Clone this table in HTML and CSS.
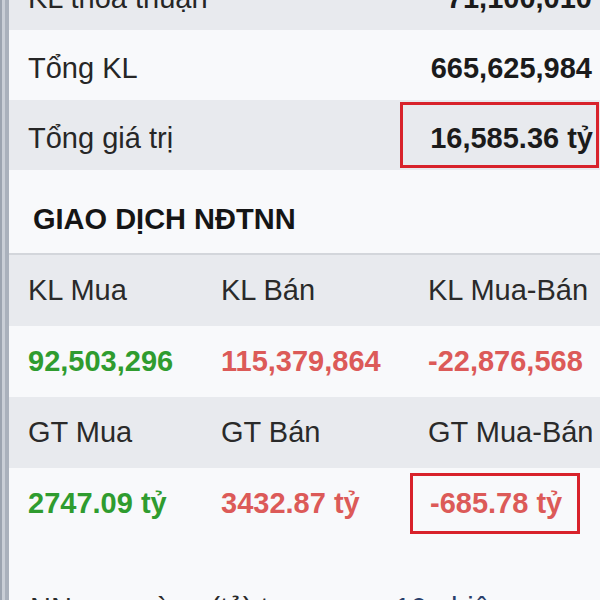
FILE: index.html
```html
<!DOCTYPE html>
<html lang="vi">
  <head>
    <meta charset="UTF-8" />
    <meta name="viewport" content="width=device-width, initial-scale=1.0" />
    <title>Giao dịch NĐTNN</title>
    <link rel="stylesheet" href="styles.css">
  </head>
  <body>
    <div class="page">
      <div class="edge"></div>
      <div class="main">
        <!-- market summary -->
        <div class="row gray cut">
          <span class="label">KL thỏa thuận</span>
          <span class="val">71,100,010</span>
        </div>
        <div class="row">
          <span class="label">Tổng KL</span>
          <span class="val">665,625,984</span>
        </div>
        <div class="row gray">
          <span class="label">Tổng giá trị</span>
          <span class="val boxed">16,585.36 tỷ</span>
        </div>

        <div class="section-title">GIAO DỊCH NĐTNN</div>

        <!-- foreign investors table -->
        <div class="table">
          <div class="trow head">
            <div class="cell">KL Mua</div>
            <div class="cell">KL Bán</div>
            <div class="cell">KL Mua-Bán</div>
          </div>
          <div class="trow">
            <div class="cell num up">92,503,296</div>
            <div class="cell num down">115,379,864</div>
            <div class="cell num down">-22,876,568</div>
          </div>
          <div class="trow head">
            <div class="cell">GT Mua</div>
            <div class="cell">GT Bán</div>
            <div class="cell">GT Mua-Bán</div>
          </div>
          <div class="trow">
            <div class="cell num up">2747.09 tỷ</div>
            <div class="cell num down">3432.87 tỷ</div>
            <div class="cell num down"><span class="mark">-685.78 tỷ</span></div>
          </div>
        </div>

        <div class="footer">NN mua ròng (tỷ) trong <span class="link">10 phiên</span></div>
      </div>
    </div>
  </body>
</html>
```

FILE: styles.css
```css
/* page */
body {
  margin: 0;
  background-color: #f8f9fb;
  font-family: "Liberation Sans", Arial, sans-serif;
  font-size: 29px;
  color: #262626;
  overflow: hidden;
}
.page {
  display: flex;
  height: 600px;
  overflow: hidden;
}
.edge {
  width: 9px;
  flex-shrink: 0;
  background: linear-gradient(to right, #9ca4b0 0, #9ca4b0 2px, #c9ced6 2px, #c9ced6 5px, #aab1bc 5px);
}
.main {
  flex: 1;
  min-width: 0;
}

/* summary rows */
.row {
  display: flex;
  justify-content: space-between;
  align-items: center;
  height: 70px;
  padding-left: 19px;
  background-color: #f8f9fb;
}
.row.gray {
  background-color: #e8eaee;
}
.row.cut {
  margin-top: -40px;
}
.label {
  line-height: 64px;
  padding-top: 6px;
}
.val {
  font-weight: bold;
  color: #1b1b1b;
  line-height: 64px;
  padding-top: 6px;
  padding-right: 8px;
}
.val.boxed {
  box-sizing: border-box;
  width: 199px;
  height: 66px;
  margin-right: 1px;
  padding: 3px 3px 0 0;
  line-height: 60px;
  text-align: right;
  border: 3px solid #d8222b;
}

.section-title {
  height: 85px;
  padding-left: 24px;
  font-weight: bold;
  color: #151515;
  line-height: 33px;
  box-sizing: border-box;
  padding-top: 33px;
  border-bottom: 2px solid #d3d6db;
}

/* table */
.trow {
  display: grid;
  grid-template-columns: 193px 207px 1fr;
  align-items: center;
  height: 71px;
  background-color: #f8f9fb;
}
.trow.head {
  background-color: #e8eaee;
  color: #2a2a2a;
}
.cell {
  padding-left: 19px;
  line-height: 33px;
  white-space: nowrap;
}
.num {
  font-weight: bold;
}
.up {
  color: #2f9c2f;
}
.down {
  color: #dc5a58;
}
.mark {
  display: inline-block;
  margin-left: -18px;
  padding: 11px 15px 11px 17px;
  border: 3px solid #d8222b;
}

.footer {
  padding: 53px 0 0 21px;
  line-height: 33px;
  color: #2a2a2a;
  white-space: nowrap;
}
.link {
  color: #2a3f6b;
  margin-left: 60px;
}
```
